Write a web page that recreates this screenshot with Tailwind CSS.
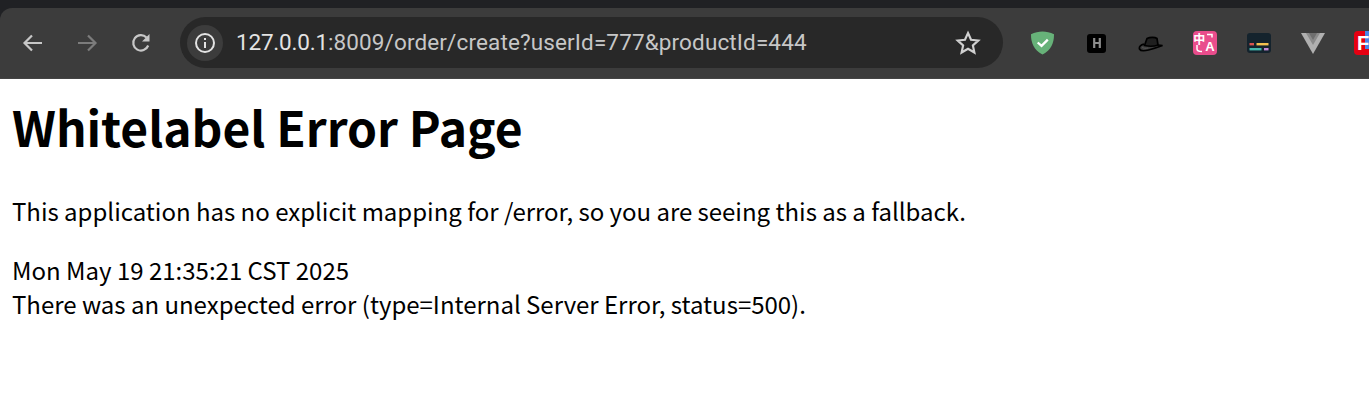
<!DOCTYPE html>
<html><head><meta charset="utf-8"><script src="https://cdn.jsdelivr.net/npm/@tailwindcss/browser@4"></script></head>
<body class="bg-white text-black overflow-hidden font-['Noto_Sans_CJK_SC',sans-serif]">
<header class="bg-[#202124]">
  <div class="h-2"></div>
  <div class="h-[71px] bg-[#3c3c3c] rounded-tl-[12px] border-b border-[#444] flex items-center relative">
    <div class="flex items-center w-[180px] pl-[21px] gap-[30px] text-[#c7c7c7]">
      <svg class="w-6 h-6" viewBox="0 0 24 24" fill="none" stroke="#c7c7c7" stroke-width="2.200"><path d="M21 12H4M11 4.500 3.500 12l7.500 7.500"/></svg>
      <svg class="w-6 h-6" viewBox="0 0 24 24" fill="none" stroke="#7c7c7c" stroke-width="2.200"><path d="M3 12h17M13 4.500l7.500 7.500-7.500 7.500"/></svg>
      <svg class="w-6 h-6" viewBox="0 0 24 24" fill="none" stroke="#c7c7c7" stroke-width="2.200"><path d="M19.200 14.500A7.700 7.700 0 1 1 17.500 6.500"/><path d="M20.500 3v7.500H13z" fill="#c7c7c7" stroke="none"/></svg>
    </div>
    <div class="w-[823px] h-[51px] rounded-full bg-[#282828] flex items-center pl-[7px] pr-[22px] mb-[1px]">
      <div class="w-9 h-9 rounded-full bg-[#3c3c3c] flex items-center justify-center">
        <svg class="w-[22px] h-[22px]" viewBox="0 0 22 22" fill="none" stroke="#e3e3e3" stroke-width="2"><circle cx="11" cy="11" r="9"/><path d="M11 10v6M11 6v2"/></svg>
      </div>
      <div class="ml-[13px] text-[22.500px] text-[#c7c7c7] font-['Roboto',sans-serif] leading-none flex-1 whitespace-nowrap tracking-[0.13px]"><span class="text-[#e3e3e3] tracking-[-0.2px]">127.0.0.1</span>:8009/order/create?userId=777&amp;productId=444</div>
      <svg class="w-[26px] h-[26px] ml-[2px]" viewBox="0 0 24 24" fill="none" stroke="#d0d0d0" stroke-width="2"><path d="M12 2.800l2.800 6.200 6.700.7-5 4.500 1.400 6.600L12 17.400l-5.900 3.400 1.400-6.600-5-4.500 6.700-.7z"/></svg>
    </div>
    <div class="flex items-center ml-[12.500px] overflow-hidden flex-1 h-full">
      <div class="w-[54px] shrink-0 flex justify-center">
        <svg class="w-[25px] h-[25px] -mt-[2px]" viewBox="0 0 26 26"><path d="M13 1.500C9 1.500 5 2.500 1 4.500c0 9 3 16.500 12 21 9-4.500 12-12 12-21-4-2-8-3-12-3z" fill="#67b279"/><path d="M8 13l4 3.500 6.500-6.500" fill="none" stroke="#fff" stroke-width="2.400"/></svg>
      </div>
      <div class="w-[54px] shrink-0 flex justify-center">
        <div class="w-[19px] h-[19px] rounded-[3px] bg-black flex items-center justify-center"><svg class="w-[8px] h-[10px]" viewBox="0 0 8 10" fill="none" stroke="#8c8c8c" stroke-width="2.200"><path d="M1.200 0v10M6.800 0v10M1.200 5h5.600"/></svg></div>
      </div>
      <div class="w-[54px] shrink-0 flex justify-center">
        <svg class="w-[26px] h-[16px] mt-[2px]" viewBox="0 0 26 16" fill="none" stroke="#000" stroke-width="1.700"><path d="M6 8C2.500 9 1 11 1.500 13c1 2 5 2 9 1s10-3 14-4.500l-4.500-.5"/><path d="M6.500 9.500 9 2.500C12 1 17 1 19 2.500L20 9c-4 1.500-9 1.500-13.500.5z" fill="#1f1f1f"/><path d="M4 11c1.500 1.500 4 1.500 6 1" stroke="#555" stroke-width="1"/></svg>
      </div>
      <div class="w-[54px] shrink-0 flex justify-center">
        <div class="w-6 h-6 rounded-[4px] bg-[#e94d8c] text-white flex items-center justify-center gap-0 leading-none relative overflow-hidden">
          <span class="text-[12px] font-bold -mt-[9px] -ml-[1px]">中</span>
          <span class="text-[13px] font-bold mt-[7px] font-['Liberation_Sans',sans-serif]">A</span>
          <svg class="absolute inset-0 w-6 h-6" viewBox="0 0 24 24" fill="none" stroke="#fff" stroke-width="1.500"><path d="M14 3.500h5v3M4 14v4c0 2 2 2.500 5 2.500"/></svg>
        </div>
      </div>
      <div class="w-[54px] shrink-0 flex justify-center">
        <svg class="w-6 h-[20px]" viewBox="0 0 24 20"><rect width="24" height="20" rx="3" fill="#14232d"/><rect x="2.500" y="10" width="4.500" height="2.400" fill="#d9534f"/><rect x="9.500" y="10" width="12" height="2.400" fill="#f2c14e"/><rect x="2.500" y="15" width="12" height="2.400" fill="#45b8ac"/><rect x="17" y="15" width="4.500" height="2.400" fill="#c58ad6"/></svg>
      </div>
      <div class="w-[54px] shrink-0 flex justify-center">
        <svg class="w-6 h-[21px]" viewBox="0 0 24 21"><path d="M0 0h24L12 21z" fill="#b0b0b0"/><path d="M5 0h14l-7 12z" fill="#8a8a8a"/><path d="M8 0h8l-4 7z" fill="#6e6e6e"/></svg>
      </div>
      <div class="w-6 h-6 shrink-0 relative ml-[14.500px] rounded-[4px] bg-[#e60012] overflow-hidden">
        <div class="absolute top-0 left-[11px] w-[13px] h-[18px] bg-[#4a86e8]"></div>
        <div class="relative text-white font-bold text-[20px] leading-6 pl-[3px] font-['Liberation_Sans',sans-serif]">F</div>
      </div>
    </div>
  </div>
</header>
<main class="pl-[12px]">
  <h1 class="text-[48px] font-bold leading-[72px] mt-[11px] tracking-[-0.04px]">Whitelabel Error Page</h1>
  <p class="text-[24px] leading-[34px] mt-[32px] tracking-[-0.012px]">This application has no explicit mapping for /error, so you are seeing this as a fallback.</p>
  <div class="text-[24px] leading-[34px] mt-[25px]">Mon May 19 21:35:21 CST 2025</div>
  <div class="text-[24px] leading-[34px] tracking-[-0.012px]">There was an unexpected error (type=Internal Server Error, status=500).</div>
</main>
</body></html>
